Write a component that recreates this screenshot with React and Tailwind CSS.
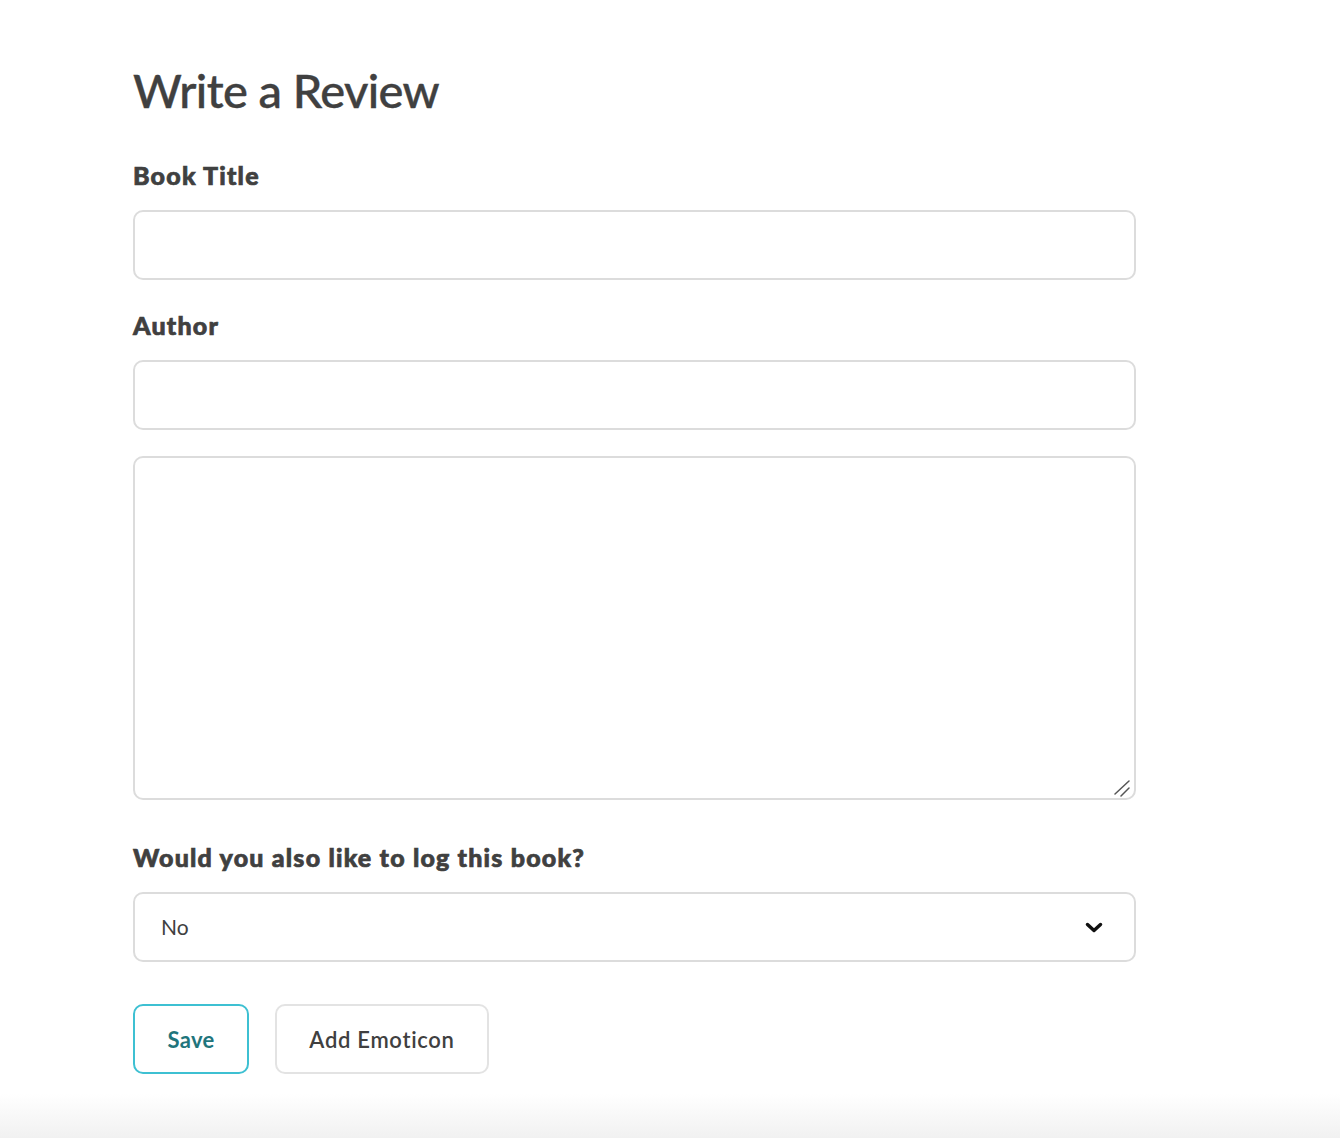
import { useState } from 'react';

const font = { fontFamily: 'Lato, "Noto Sans", sans-serif' };

export default function App() {
  const [title, setTitle] = useState('');
  const [author, setAuthor] = useState('');
  const [review, setReview] = useState('');
  const [logBook, setLogBook] = useState('No');

  return (
    <div className="min-h-[1138px] bg-white flex flex-col text-[#404040]" style={font}>
      <div className="flex-1 pl-[133px] pt-[62px]">
        <div className="w-[1003px] flex flex-col">
          <h1 className="text-[47px] leading-[56px] font-medium tracking-[-0.6px] [-webkit-text-stroke:0.4px_#404040]">Write a Review</h1>

          <label className="mt-[42px] text-[25px] leading-[30px] font-black tracking-[1.2px] [-webkit-text-stroke:0.7px_#404040]">Book Title</label>
          <input
            value={title}
            onChange={(e) => setTitle(e.target.value)}
            className="mt-[20px] h-[70px] rounded-[10px] border-2 border-[#dcdcdc] px-6 text-[20px] outline-none"
          />

          <label className="mt-[30px] text-[25px] leading-[30px] font-black tracking-[1.2px] [-webkit-text-stroke:0.7px_#404040]">Author</label>
          <input
            value={author}
            onChange={(e) => setAuthor(e.target.value)}
            className="mt-[20px] h-[70px] rounded-[10px] border-2 border-[#dcdcdc] px-6 text-[20px] outline-none"
          />

          <div className="relative mt-[26px] flex">
            <textarea
              value={review}
              onChange={(e) => setReview(e.target.value)}
              className="w-full h-[344px] resize-none rounded-[10px] border-2 border-[#dcdcdc] px-6 py-4 text-[20px] outline-none"
            />
            <svg className="pointer-events-none absolute right-[5px] bottom-[3px]" width="17" height="17" viewBox="0 0 17 17">
              <path d="M1 14 L15 1 M7 16 L15 8" stroke="#555" strokeWidth="1.5" strokeLinecap="round" />
            </svg>
          </div>

          <label className="mt-[42px] text-[25px] leading-[30px] font-black tracking-[1.2px] [-webkit-text-stroke:0.7px_#404040]">Would you also like to log this book?</label>
          <div className="relative mt-[20px]">
            <select
              value={logBook}
              onChange={(e) => setLogBook(e.target.value)}
              className="w-full h-[70px] appearance-none rounded-[10px] border-2 border-[#dcdcdc] bg-white pl-[26px] text-[21px] outline-none"
              style={font}
            >
              <option>No</option>
              <option>Yes</option>
            </select>
            <svg className="pointer-events-none absolute right-[33px] top-[30px]" width="18" height="12" viewBox="0 0 18 12">
              <path d="M2.5 2.5 L9 8.5 L15.5 2.5" fill="none" stroke="#111" strokeWidth="3.5" strokeLinecap="round" strokeLinejoin="round" />
            </svg>
          </div>

          <div className="mt-[42px] flex gap-[26px]">
            <button className="h-[70px] w-[116px] rounded-[10px] border-2 border-[#3ec0d2] text-[22px] font-bold tracking-[0.3px] text-[#1f757c]">Save</button>
            <button className="h-[70px] w-[214px] rounded-[10px] border-2 border-[#e3e3e3] text-[22px] font-semibold tracking-[0.7px] text-[#404040]">Add Emoticon</button>
          </div>
        </div>
      </div>
      <div className="h-[44px] bg-gradient-to-b from-white to-[#f1f1f1]" />
    </div>
  );
}
